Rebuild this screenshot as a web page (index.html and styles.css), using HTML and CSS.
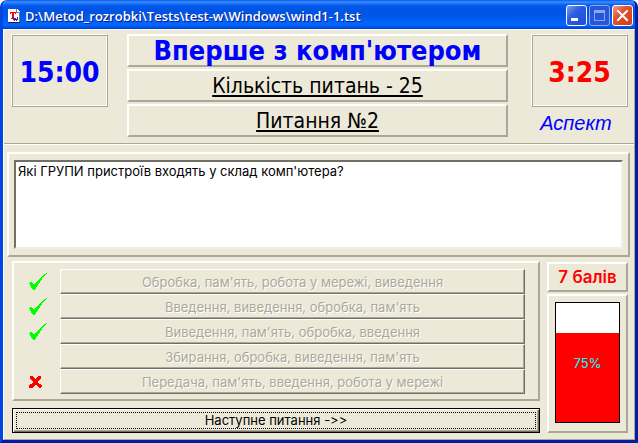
FILE: index.html
```html
<!DOCTYPE html>
<html lang="uk">
<head>
    <meta charset="UTF-8">
    <meta name="viewport" content="width=device-width, initial-scale=1.0">
    <title>Вперше з комп'ютером</title>
    <link rel="stylesheet" href="styles.css">
</head>
<body>
    <div class="window">
        <!-- Заголовок вікна -->
        <div class="title-bar">
            <svg class="app-icon" width="12" height="14" viewBox="0 0 12 14" shape-rendering="crispEdges">
                <path d="M0 0h9l3 3v11H0z" fill="#fff"/>
                <path d="M9 0v3h3v10h-1V4H8V0z" fill="#777"/>
                <path d="M0 13h12v1H0z" fill="#222"/>
                <path d="M2 3h6v2H7V4H6v5h1v1H3V9h1V4H3v1H2z" fill="#f00"/>
                <path d="M5 8h1v2h1V9h1v1h1V8h1v3H9v1H8v-1H7v1H6v-1H5z" fill="#22c"/>
            </svg>
            <span class="title-text">D:\Metod_rozrobki\Tests\test-w\Windows\wind1-1.tst</span>
            <div class="title-buttons">
                <button class="title-btn" type="button" aria-label="Згорнути">
                    <svg width="19" height="19" viewBox="0 0 19 19"><path d="M4 12h7v3H4z" fill="#fff"/></svg>
                </button>
                <button class="title-btn maximize" type="button" aria-label="Розгорнути" disabled>
                    <svg width="19" height="19" viewBox="0 0 19 19"><path d="M4 4h11v11H4zM5 7v7h9V7z" fill="#8ea4ee" fill-rule="evenodd"/></svg>
                </button>
                <button class="title-btn close" type="button" aria-label="Закрити">
                    <svg width="19" height="19" viewBox="0 0 19 19"><path d="M5 5l9 9M14 5l-9 9" stroke="#fff" stroke-width="2" stroke-linecap="square"/></svg>
                </button>
            </div>
        </div>

        <div class="client">
            <!-- Таймери та назва тесту -->
            <div class="header">
                <div class="clock total">15:00</div>
                <div class="info">
                    <h1 class="panel info-title">Вперше з комп'ютером</h1>
                    <p class="panel info-row">Кількість питань - 25</p>
                    <p class="panel info-row">Питання №2</p>
                </div>
                <div class="right-col">
                    <div class="clock left-time">3:25</div>
                    <div class="brand">Аспект</div>
                </div>
            </div>

            <!-- Питання -->
            <div class="panel question-panel">
                <textarea class="question" aria-label="Питання" readonly>Які ГРУПИ пристроїв входять у склад комп'ютера?</textarea>
            </div>

            <div class="bottom">
                <div class="answers-col">
                    <!-- Варіанти відповідей -->
                    <div class="panel answers">
                        <div class="answer">
                            <span class="mark"><svg width="18" height="17" viewBox="0 0 18 17" shape-rendering="crispEdges"><path d="M0 10h1V9h2v1h1v1h2v-1h1V9h1V8h1V7h1V6h1V5h1V4h1V3h1V2h1V1h2V0h1v1h-1v1h-1v1h-1v1h-1v1h-1v2h-1v1h-1v2h-1v1H9v2H8v1H7v2H6v1H4v-1H3v-1H2v-2H1v-2H0z" fill="#0f0"/></svg></span>
                            <button class="answer-btn" type="button" disabled>Обробка, пам'ять, робота у мережі, виведення</button>
                        </div>
                        <div class="answer">
                            <span class="mark"><svg width="18" height="17" viewBox="0 0 18 17" shape-rendering="crispEdges"><path d="M0 10h1V9h2v1h1v1h2v-1h1V9h1V8h1V7h1V6h1V5h1V4h1V3h1V2h1V1h2V0h1v1h-1v1h-1v1h-1v1h-1v1h-1v2h-1v1h-1v2h-1v1H9v2H8v1H7v2H6v1H4v-1H3v-1H2v-2H1v-2H0z" fill="#0f0"/></svg></span>
                            <button class="answer-btn" type="button" disabled>Введення, виведення, обробка, пам'ять</button>
                        </div>
                        <div class="answer">
                            <span class="mark"><svg width="18" height="17" viewBox="0 0 18 17" shape-rendering="crispEdges"><path d="M0 10h1V9h2v1h1v1h2v-1h1V9h1V8h1V7h1V6h1V5h1V4h1V3h1V2h1V1h2V0h1v1h-1v1h-1v1h-1v1h-1v1h-1v2h-1v1h-1v2h-1v1H9v2H8v1H7v2H6v1H4v-1H3v-1H2v-2H1v-2H0z" fill="#0f0"/></svg></span>
                            <button class="answer-btn" type="button" disabled>Виведення, пам'ять, обробка, введення</button>
                        </div>
                        <div class="answer">
                            <span class="mark"></span>
                            <button class="answer-btn" type="button" disabled>Збирання, обробка, виведення, пам'ять</button>
                        </div>
                        <div class="answer">
                            <span class="mark"><svg width="13" height="12" viewBox="0 0 13 12" shape-rendering="crispEdges"><path d="M1 0h3v1h1v1h1v1h1V2h1V1h1V0h3v3h-1v1h-1v1H9v2h1v1h2v1h1v2h-1v1h-2v-1H9v-1H8V9H6v1H5v1H4v1H0V9h1V8h2V7h1V5H3V4H2V3H1z" fill="#f00"/></svg></span>
                            <button class="answer-btn" type="button" disabled>Передача, пам'ять, введення, робота у мережі</button>
                        </div>
                    </div>
                    <button class="next-btn" type="button"><span class="focus">Наступне питання -&gt;&gt;</span></button>
                </div>

                <!-- Оцінка -->
                <div class="score-col">
                    <div class="panel score">7 балів</div>
                    <div class="panel gauge-panel">
                        <div class="gauge">
                            <div class="gauge-fill" style="height: 75%"></div>
                            <span class="gauge-text">75%</span>
                        </div>
                    </div>
                </div>
            </div>
        </div>
    </div>
</body>
</html>
```
FILE: styles.css
```css
* {
    box-sizing: border-box;
}

body {
    margin: 0;
    font-family: Inter, "Liberation Sans", sans-serif;
    font-size: 13px;
    font-variant-ligatures: none;
    color: #000;
    background: #fff;
}

button, textarea {
    font: inherit;
    font-variant-ligatures: none;
    margin: 0;
}

.window {
    display: flex;
    flex-direction: column;
    min-height: 100vh;
    border: solid;
    border-width: 0 3px 3px;
    border-color: #0046e0 #001ea0 #001ea0 #0046e0;
    border-radius: 7px 7px 0 0;
    background: #ece9d8;
    overflow: hidden;
}

/* title bar */
.title-bar {
    display: flex;
    align-items: center;
    gap: 5px;
    height: 29px;
    margin: 0 -3px;
    padding: 2px 5px 0 8px;
    background: linear-gradient(to bottom, #0a5ae8 0, #3a8cff 2px, #0560f0 5px, #0054e3 9px, #0055e5 15px, #0266ff 24px, #0062f8 26px, #003dd0 29px);
}

.title-text {
    flex: 1;
    font-family: "Open Sans", sans-serif;
    font-size: 13px;
    font-weight: 600;
    white-space: nowrap;
    color: #fff;
    text-shadow: 1px 1px #0a1883;
}

.title-buttons {
    display: flex;
    gap: 2px;
}

.title-btn {
    width: 21px;
    height: 21px;
    padding: 0;
    border: 1px solid #fff;
    border-radius: 3px;
    background: linear-gradient(135deg, #7b9ff0, #2a5be0 40%, #1c4fd8);
}

.title-btn svg {
    display: block;
}

.title-btn.maximize {
    border-color: #8ea4ee;
    background: #2558d8;
}

.title-btn.close {
    background: linear-gradient(135deg, #f0a08a, #e2502c 40%, #d0401c);
}

.client {
    display: flex;
    flex: 1;
    flex-direction: column;
    border: 1px solid;
    border-color: #fff #aca899 #aca899 #fff;
}

.panel {
    margin: 0;
    border: 2px solid;
    border-color: #fff #aca899 #aca899 #fff;
}

/* header */
.header {
    display: flex;
    padding: 4px 6px 6px 7px;
    border-bottom: 1px solid #aca899;
    box-shadow: 0 1px #fff;
}

.clock {
    display: flex;
    align-items: center;
    justify-content: center;
    width: 97px;
    height: 73px;
    padding-top: 3px;
    border: 1px solid;
    border-color: #fff #aca899 #aca899 #fff;
    box-shadow: inset 1px 1px #aca899, inset -1px -1px #fff;
    font-family: "DejaVu Sans Condensed", "DejaVu Sans", sans-serif;
    font-size: 28px;
    font-weight: bold;
}

.total {
    color: #00f;
}

.left-time {
    color: #f00;
}

.info {
    display: flex;
    flex: 1;
    flex-direction: column;
    gap: 2px;
    margin: 0 23px 0 19px;
    font-family: "DejaVu Sans Condensed", "DejaVu Sans", sans-serif;
    text-align: center;
}

.info-title {
    padding-top: 1px;
    font-size: 27px;
    line-height: 28px;
    color: #00f;
}

.info-row {
    padding-top: 1px;
    font-size: 21px;
    line-height: 28px;
    text-decoration: underline;
}

.brand {
    margin-top: 4px;
    padding-right: 7px;
    font-family: "Liberation Sans", sans-serif;
    font-size: 20px;
    font-style: italic;
    line-height: 24px;
    text-align: center;
    color: #00f;
}

/* question */
.question-panel {
    display: flex;
    flex: 1;
    margin: 8px 4px 4px 3px;
    padding: 6px 5px;
}

.question {
    flex: 1;
    min-height: 60px;
    padding: 0 2px;
    border: 2px solid;
    border-color: #716f64 #f1efe2 #f1efe2 #716f64;
    outline: none;
    background: #fff;
    color: #000;
    line-height: 18px;
    resize: none;
}

/* answers */
.bottom {
    display: flex;
    gap: 7px;
    padding: 0 6px 6px 8px;
}

.answers-col {
    display: flex;
    flex: 1;
    flex-direction: column;
    gap: 7px;
}

.answers {
    padding: 6px 13px 5px 1px;
}

.answer {
    display: flex;
    height: 25px;
}

.mark {
    display: flex;
    align-items: center;
    width: 45px;
    padding-left: 14px;
}

.answer-btn {
    flex: 1;
    padding: 0;
    border: 1px solid;
    border-color: #fff #716f64 #716f64 #fff;
    background: #ece9d8;
    box-shadow: inset -1px -1px #aca899;
    color: #aca899;
    text-shadow: 1px 1px #fff;
}

.next-btn {
    display: flex;
    height: 25px;
    padding: 2px;
    border: 1px solid #000;
    background: #ece9d8;
    box-shadow: inset 1px 1px #fff, inset -1px -1px #716f64, inset -2px -2px #aca899;
    color: #000;
}

.focus {
    flex: 1;
    margin: 1px;
    border: 1px dotted #000;
    line-height: 15px;
}

/* score */
.score-col {
    display: flex;
    flex-direction: column;
    gap: 2px;
    width: 81px;
    margin-top: 1px;
}

.score {
    padding-top: 1px;
    font-size: 17px;
    font-weight: 600;
    line-height: 25px;
    text-align: center;
    color: #f00;
}

.gauge-panel {
    display: flex;
    flex: 1;
    padding: 6px 6px 8px;
}

.gauge {
    display: grid;
    flex: 1;
    border: 1px solid #000;
    background: #fff;
}

.gauge-fill {
    grid-area: 1 / 1;
    align-self: end;
    background: #f00;
}

.gauge-text {
    grid-area: 1 / 1;
    place-self: center;
    color: #0ff;
}
```
